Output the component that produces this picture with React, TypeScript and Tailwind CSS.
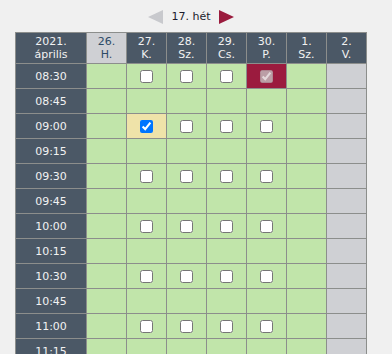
import React from "react";

type Cell = "g" | "c" | "x" | "y" | "m" | "s";

const days = [
  { d: "26.", n: "H.", light: true },
  { d: "27.", n: "K." },
  { d: "28.", n: "Sz." },
  { d: "29.", n: "Cs." },
  { d: "30.", n: "P." },
  { d: "1.", n: "Sz." },
  { d: "2.", n: "V." },
];

const times = [
  "08:30","08:45","09:00","09:15","09:30","09:45","10:00","10:15","10:30","10:45","11:00","11:15",
];

function rowCells(t: string, i: number): Cell[] {
  const hasBox = t.endsWith(":00") || t.endsWith(":30");
  if (i === 0) return ["g", "c", "c", "c", "m", "g", "s"];
  if (t === "09:00") return ["g", "y", "c", "c", "c", "g", "s"];
  if (hasBox) return ["g", "c", "c", "c", "c", "g", "s"];
  return ["g", "g", "g", "g", "g", "g", "s"];
}

function Box({ checked, disabled }: { checked?: boolean; disabled?: boolean }) {
  return (
    <input
      type="checkbox"
      defaultChecked={checked}
      disabled={disabled}
      className="m-0 h-[13px] w-[13px]"
    />
  );
}

export default function App() {
  return (
    <div
      className="min-h-screen bg-[#f0f0f0] text-[11px] leading-[13px]"
      style={{ fontFamily: '"DejaVu Sans", Verdana, sans-serif' }}
    >
      <div className="ml-[15px] w-[352px]">
        <div className="flex h-[32px] items-center justify-center gap-[7px] pt-[1px]">
          <svg width="15" height="14" viewBox="0 0 15 14" className="mr-[1px]">
            <polygon points="15,0 15,14 0,7" fill="#c8c9cd" />
          </svg>
          <span className="text-[#1c1c2c]">17. hét</span>
          <svg width="15" height="14" viewBox="0 0 15 14" className="ml-[1px]">
            <polygon points="0,0 0,14 15,7" fill="#9a1b3d" />
          </svg>
        </div>
        <div className="grid grid-cols-[70px_repeat(7,39px)] gap-px border border-[#8c8e8c] bg-[#8c8e8c] [grid-auto-rows:24px] [grid-template-rows:30px]">
          <div className="flex flex-col items-center justify-center bg-[#4b5866] text-[#f2f2f2]">
            <span>2021.</span>
            <span>április</span>
          </div>
          {days.map((d, i) => (
            <div
              key={i}
              className={
                "flex flex-col items-center justify-center " +
                (d.light ? "bg-[#cfd0d4] text-[#2d4b66]" : "bg-[#4b5866] text-[#f2f2f2]")
              }
            >
              <span>{d.d}</span>
              <span>{d.n}</span>
            </div>
          ))}
          {times.map((t, ri) => (
            <React.Fragment key={t}>
              <div className="flex items-center justify-center bg-[#4b5866] text-[#f2f2f2]">{t}</div>
              {rowCells(t, ri).map((c, ci) => {
                if (c === "s") return <div key={ci} className="bg-[#cfd0d4]" />;
                if (c === "g") return <div key={ci} className="bg-[#c1e5aa]" />;
                if (c === "c")
                  return (
                    <div key={ci} className="flex items-center justify-center bg-[#c1e5aa]">
                      <Box />
                    </div>
                  );
                if (c === "y")
                  return (
                    <div key={ci} className="flex items-center justify-center bg-[#efe3a9]">
                      <Box checked />
                    </div>
                  );
                return (
                  <div key={ci} className="flex items-center justify-center bg-[#9b1b3e]">
                    <Box checked disabled />
                  </div>
                );
              })}
            </React.Fragment>
          ))}
        </div>
      </div>
    </div>
  );
}
